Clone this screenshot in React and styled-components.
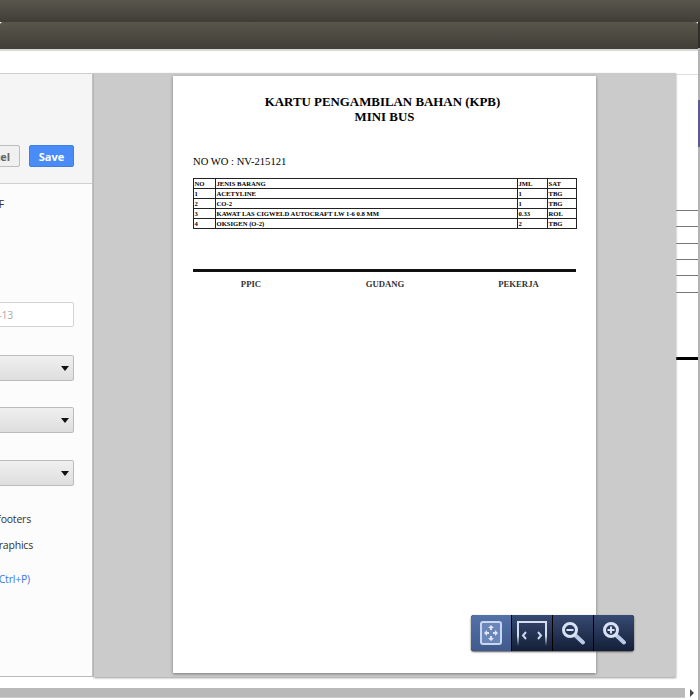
import { createGlobalStyle } from 'styled-components';
import styled from 'styled-components';

const GlobalStyle = createGlobalStyle`
  html, body {
    margin: 0;
    padding: 0;
    background: #fff;
  }
`;

const Screen = styled.div`
  width: 700px;
  height: 700px;
  overflow: hidden;
  display: flex;
  flex-direction: column;
  background: #3f3d36;
  font-family: "Open Sans", "Noto Sans", sans-serif;
`;

const DarkBar = styled.div`
  height: ${(p) => p.$height}px;
  flex: none;
  border-radius: ${(p) => p.$radius || 0}px ${(p) => p.$radius || 0}px 0 0;
  background: linear-gradient(#59574c, #3f3d36);
`;

const Lower = styled.div`
  flex: 1;
  min-height: 0;
  display: flex;
`;

const Main = styled.div`
  width: 698px;
  flex: none;
  display: flex;
  flex-direction: column;
  background: #fff;
`;

const Stripe = styled.div`
  flex: 1;
  display: flex;
  flex-direction: column;
  background: #b4b4b4;
`;

const StripeBlock = styled.div`
  height: ${(p) => p.$height}px;
  flex: none;
  background: ${(p) => p.$color};
`;

const WhiteStrip = styled.div`
  height: 24px;
  flex: none;
  background: #fff;
  border-top: 2px solid #d8d8d8;
  box-sizing: border-box;
`;

const Body = styled.div`
  flex: none;
  height: 604px;
  display: flex;
`;

const Sidebar = styled.div`
  width: 92px;
  flex: none;
  background: #fcfcfc;
  border-right: 2px solid #c4c4c4;
  display: flex;
  flex-direction: column;
  align-items: flex-end;
  overflow: hidden;
  border-top: 1px solid #cfcfcf;
  border-bottom: 1px solid #bbb;
  box-sizing: content-box;
`;

const SidebarHead = styled.div`
  width: 92px;
  height: 110px;
  flex: none;
  box-sizing: border-box;
  background: #f5f5f5;
  border-bottom: 1px solid #d0d0d0;
  display: flex;
  justify-content: flex-end;
  align-items: flex-start;
  gap: 9px;
  padding: 71px 18px 0 0;
`;

const Button = styled.div`
  height: 22px;
  flex: none;
  box-sizing: border-box;
  border-radius: 2px;
  display: flex;
  align-items: center;
  justify-content: center;
  font-size: 11px;
  font-weight: 700;
  width: ${(p) => p.$width}px;
  padding-left: ${(p) => (p.$primary ? 0 : 4)}px;
  color: ${(p) => (p.$primary ? '#fff' : '#666')};
  background: ${(p) => (p.$primary ? '#4a8cf7' : '#f0f0f0')};
  border: 1px solid ${(p) => (p.$primary ? '#3f7fe8' : '#bdbdbd')};
`;

const Fields = styled.div`
  width: 92px;
  display: flex;
  flex-direction: column;
  align-items: flex-end;
  padding-right: 18px;
  box-sizing: border-box;
`;

const Fragment = styled.div`
  flex: none;
  white-space: nowrap;
  font-size: 10.5px;
  letter-spacing: -0.2px;
  line-height: 16px;
  color: ${(p) => p.$color || '#333'};
  margin-top: ${(p) => p.$top}px;
  margin-right: ${(p) => p.$right || 0}px;
`;

const RangeInput = styled.div`
  width: 130px;
  height: 25px;
  flex: none;
  box-sizing: border-box;
  margin-top: ${(p) => p.$top}px;
  background: #fff;
  border: 1px solid #d4d4d4;
  border-radius: 2px;
  display: flex;
  justify-content: flex-end;
  align-items: center;
  padding-right: 60px;
  font-size: 10.5px;
  letter-spacing: -0.2px;
  color: #aaa;
`;

const Placeholder = styled.span`
  flex: none;
  white-space: nowrap;
`;

const Select = styled.div`
  width: 130px;
  height: 26px;
  flex: none;
  box-sizing: border-box;
  margin-top: ${(p) => p.$top}px;
  background: linear-gradient(#f0f0f0, #dedede);
  border: 1px solid #bcbcbc;
  border-radius: 2px;
  display: flex;
  justify-content: flex-end;
  align-items: center;
  padding-right: 4px;
`;

const Caret = styled.span`
  width: 0;
  height: 0;
  border-left: 4.5px solid transparent;
  border-right: 4.5px solid transparent;
  border-top: 5px solid #111;
`;

const Preview = styled.div`
  width: 582px;
  flex: none;
  position: relative;
  background: #cbcbcb;
  display: flex;
  padding: 3px 0 0 79px;
  box-sizing: border-box;
  box-shadow: 0 1px 2px #999;
`;

const Sheet = styled.div`
  width: 423px;
  height: 597px;
  flex: none;
  box-sizing: border-box;
  background: #fff;
  box-shadow: 0 1px 3px #777;
  padding: 19px 20px 0;
  font-family: "Liberation Serif", "Times New Roman", serif;
  color: #000;
`;

const Heading = styled.div`
  text-align: center;
  font-size: 12.9px;
  line-height: 15px;
  font-weight: 700;
`;

const HeadingLine = styled.div`
  padding-right: ${(p) => p.$shift || 0}px;
`;

const WorkOrder = styled.div`
  font-size: 10.6px;
  line-height: 12px;
  margin-top: 31px;
`;

const Table = styled.table`
  width: 383px;
  border-collapse: collapse;
  margin-top: 10px;
  table-layout: fixed;
  font-size: 6.65px;
  font-weight: 700;
`;

const Cell = styled.td`
  border: 1px solid #222;
  padding: 0 0 0 0.5px;
  height: 9px;
  line-height: 9px;
  white-space: nowrap;
  overflow: hidden;
`;

const Rule = styled.div`
  height: 3px;
  background: #111;
  margin-top: 40px;
`;

const Signatures = styled.div`
  display: grid;
  grid-template-columns: 116px 152px 115px;
  margin-top: 6px;
  font-size: 8.7px;
  line-height: 12px;
  font-weight: 700;
  color: #333;
  text-align: center;
`;

const PageEdge = styled.div`
  flex: 1;
  min-width: 0;
  background: #fff;
  display: flex;
  flex-direction: column;
  border-top: 1px solid #ddd;
  margin-top: 1px;
`;

const EdgeLine = styled.div`
  height: ${(p) => (p.$thick ? 3 : 1)}px;
  background: ${(p) => (p.$thick ? '#000' : '#777')};
  margin-top: ${(p) => p.$top}px;
`;

const Footer = styled.div`
  flex: 1;
  display: flex;
  flex-direction: column;
  justify-content: flex-end;
  padding-bottom: 2px;
  background: #fff;
`;

const ScrollRow = styled.div`
  height: 10px;
  display: flex;
  align-items: stretch;
`;

const ScrollTrack = styled.div`
  flex: 1;
  background: #b9b9b9;
  border-bottom: 1px solid #ccc;
`;

const ScrollEnd = styled.div`
  width: 13px;
  flex: none;
  display: flex;
  align-items: center;
  justify-content: center;
  background: #fff;
`;

const ScrollArrow = styled.span`
  width: 0;
  height: 0;
  border-top: 4px solid transparent;
  border-bottom: 4px solid transparent;
  border-left: 4px solid #444;
`;

const ZoomBar = styled.div`
  position: absolute;
  left: 377px;
  top: 542px;
  height: 36px;
  display: flex;
  border-radius: 3px;
  overflow: hidden;
  box-shadow: 0 1px 2px #555;
  background: #000;
  gap: 1px;
`;

const ZoomButton = styled.div`
  width: 40px;
  flex: none;
  display: flex;
  align-items: center;
  justify-content: center;
  background: ${(p) =>
    p.$active
      ? 'linear-gradient(#5272a8, #405a8c)'
      : 'linear-gradient(#374a72, #141f38)'};
`;

const rows = [
  ['NO', 'JENIS BARANG', 'JML', 'SAT'],
  ['1', 'ACETYLINE', '1', 'TBG'],
  ['2', 'CO-2', '1', 'TBG'],
  ['3', 'KAWAT LAS CIGWELD AUTOCRAFT LW 1-6 0.8 MM', '0.33', 'ROL'],
  ['4', 'OKSIGEN (O-2)', '2', 'TBG'],
];

const FitIcon = () => (
  <svg width="24" height="26" viewBox="0 0 24 26" fill="none">
    <rect x="2" y="2" width="20" height="22" rx="2" fill="#6a86bb" stroke="#c9d6ee" strokeWidth="2" />
    <path
      d="M12 5l3 3h-2v2h-2V8H9zM12 21l3-3h-2v-2h-2v2H9zM5 13l3-3v2h2v2H8v2zM19 13l-3-3v2h-2v2h2v2z"
      fill="#dfe7f5"
    />
  </svg>
);

const WidthIcon = () => (
  <svg width="32" height="26" viewBox="0 0 32 26" fill="none">
    <defs>
      <linearGradient id="fade" gradientUnits="userSpaceOnUse" x1="0" y1="0" x2="0" y2="26">
        <stop offset="0.6" stopColor="#d5deee" />
        <stop offset="1" stopColor="#d5deee" stopOpacity="0" />
      </linearGradient>
    </defs>
    <path d="M2 26V2h28v24" stroke="url(#fade)" strokeWidth="2" />
    <path d="M10 12l-3 3.5 3 3.5M22 12l3 3.5-3 3.5" stroke="#c9d6ee" strokeWidth="2" />
  </svg>
);

const MagnifierIcon = ({ plus }) => (
  <svg width="26" height="26" viewBox="0 0 26 26" fill="none">
    <path d="M15 15L23 22.5" stroke="#b8cbe6" strokeWidth="4" strokeLinecap="round" />
    <circle cx="10" cy="10" r="6.5" stroke="#d8e2f2" strokeWidth="3" />
    <path d={plus ? 'M6.5 10h7M10 6.5v7' : 'M6.5 10h7'} stroke="#d8e2f2" strokeWidth="2" />
  </svg>
);

const App = () => {
  return (
    <Screen>
      <GlobalStyle />
      <DarkBar $height={22} />
      <Lower>
        <Main>
          <DarkBar $height={27} $radius={3} />
          <WhiteStrip />
          <Body>
            <Sidebar>
              <SidebarHead>
                <Button $width={60}>Cancel</Button>
                <Button $width={45} $primary>Save</Button>
              </SidebarHead>
              <Fields>
                <Fragment $top={12} $right={70}>PDF</Fragment>
                <RangeInput $top={90}>
                  <Placeholder>e.g. 1-5, 8, 11-13</Placeholder>
                </RangeInput>
                <Select $top={28}><Caret /></Select>
                <Select $top={26}><Caret /></Select>
                <Select $top={27}><Caret /></Select>
                <Fragment $top={25} $right={43}>Headers and footers</Fragment>
                <Fragment $top={10} $right={41}>Background graphics</Fragment>
                <Fragment $top={18} $color="#3b78e7" $right={44}>Print using system dialog… (Ctrl+P)</Fragment>
              </Fields>
            </Sidebar>
            <Preview>
              <Sheet>
                <Heading>
                  <HeadingLine $shift={4}>KARTU PENGAMBILAN BAHAN (KPB)</HeadingLine>
                  <HeadingLine>MINI BUS</HeadingLine>
                </Heading>
                <WorkOrder>NO WO : NV-215121</WorkOrder>
                <Table>
                  <colgroup>
                    <col style={{ width: 22 }} />
                    <col style={{ width: 302 }} />
                    <col style={{ width: 30 }} />
                    <col style={{ width: 29 }} />
                  </colgroup>
                  <tbody>
                    {rows.map((r) => (
                      <tr key={r[0]}>
                        {r.map((c, i) => <Cell key={i}>{c}</Cell>)}
                      </tr>
                    ))}
                  </tbody>
                </Table>
                <Rule />
                <Signatures>
                  <div>PPIC</div>
                  <div>GUDANG</div>
                  <div>PEKERJA</div>
                </Signatures>
              </Sheet>
              <ZoomBar>
                <ZoomButton $active><FitIcon /></ZoomButton>
                <ZoomButton><WidthIcon /></ZoomButton>
                <ZoomButton><MagnifierIcon /></ZoomButton>
                <ZoomButton><MagnifierIcon plus /></ZoomButton>
              </ZoomBar>
            </Preview>
            <PageEdge>
              <EdgeLine $top={135} />
              <EdgeLine $top={15} />
              <EdgeLine $top={16} />
              <EdgeLine $top={15} />
              <EdgeLine $top={15} />
              <EdgeLine $top={16} />
              <EdgeLine $top={64} $thick />
            </PageEdge>
          </Body>
          <Footer>
            <ScrollRow>
              <ScrollTrack />
              <ScrollEnd><ScrollArrow /></ScrollEnd>
            </ScrollRow>
          </Footer>
        </Main>
        <Stripe>
          <StripeBlock $height={26} $color="#2e2d28" />
          <StripeBlock $height={52} $color="#b4b4b4" />
          <StripeBlock $height={47} $color="#5a5a96" />
        </Stripe>
      </Lower>
    </Screen>
  );
};

export default App;
